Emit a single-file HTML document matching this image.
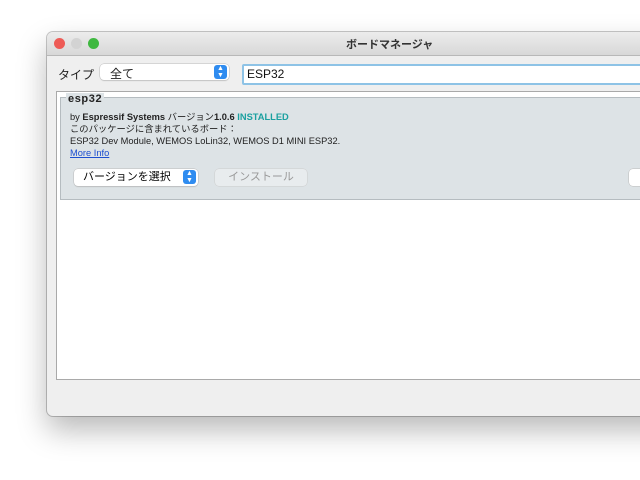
<!DOCTYPE html>
<html><head><meta charset="utf-8"><style>
body{margin:0;width:640px;height:480px;background:#fff;overflow:hidden;position:relative;font-family:"Liberation Sans","Noto Sans CJK JP",sans-serif;}
.win{position:absolute;left:47px;top:32px;width:640px;height:384px;background:#efefef;border-radius:6px;box-shadow:0 14px 30px rgba(0,0,0,0.28),0 0 0 1px #c8c8c8;overflow:hidden}
.title{position:absolute;left:0;top:0;right:0;height:23px;background:linear-gradient(#ececec,#d8d8d8);border-bottom:1px solid #b8b8b8;}
.title span{position:absolute;left:299px;top:4px;font-size:11px;color:#333;font-weight:bold}
.dot{position:absolute;top:6px;width:11px;height:11px;border-radius:50%}
.lab{position:absolute;left:11px;top:34px;font-size:12px;color:#222}
.sel{position:absolute;top:32px;height:16px;background:#fff;border-radius:4px;box-shadow:0 0 0 .5px #bbb,0 1px 1px rgba(0,0,0,.15);font-size:12px;color:#222}
.arr{position:absolute;right:2px;top:1px;width:13px;height:14px;background:#2f8cf0;border-radius:3px;color:#fff;font-size:7px;line-height:7px;text-align:center}
.search{position:absolute;left:195px;top:32px;width:460px;height:17px;background:#fff;border:2px solid #8ec3e6;border-radius:2px;font-size:12px;line-height:17px;padding-left:3px;color:#111}
.box{position:absolute;left:9px;top:59px;width:640px;height:287px;background:#fff;border:1px solid #a9a9a9}
.entry{position:absolute;left:3px;top:5px;width:640px;height:101px;background:#dde3e6;border:1px solid #b5bcc0}
.ttl{position:absolute;left:5px;top:-5px;line-height:12px;background:#dde3e6;font-size:11px;font-weight:bold;color:#222;padding:0 2px;letter-spacing:.6px}
.t{position:absolute;left:9px;font-size:9.3px;line-height:12px;height:12px;color:#222;white-space:nowrap}
.btn{position:absolute;top:71px;height:17px;border-radius:4px;font-size:11px;line-height:17px}
</style></head><body>
<div class="win">
<div class="title"><div class="dot" style="left:7px;background:#ee5b56"></div><div class="dot" style="left:24px;background:#d3d3d3"></div><div class="dot" style="left:41px;background:#3fb840"></div><span>ボードマネージャ</span></div>
<div class="lab">タイプ</div>
<div class="sel" style="left:53px;width:129px"><span style="position:absolute;left:10px;top:1px">全て</span><div class="arr">▲<br>▼</div></div>
<div class="search">ESP32</div>
<div class="box"><div class="entry">
<div class="ttl">esp32</div>
<div class="t" style="top:13px">by <b>Espressif Systems</b> バージョン<b>1.0.6</b> <b style="color:#1aa0a0">INSTALLED</b></div>
<div class="t" style="top:25px">このパッケージに含まれているボード：</div>
<div class="t" style="top:37px">ESP32 Dev Module, WEMOS LoLin32, WEMOS D1 MINI ESP32.</div>
<div class="t" style="top:49px;color:#1c4fd0;text-decoration:underline">More Info</div>
<div class="btn" style="left:13px;width:124px;background:#fff;box-shadow:0 0 0 .5px #bbb,0 1px 1px rgba(0,0,0,.15)"><span style="position:absolute;left:9px">バージョンを選択</span><div class="arr">▲<br>▼</div></div>
<div class="btn" style="left:154px;width:92px;background:#e8ecee;color:#999;box-shadow:0 0 0 .5px #ccc;text-align:center">インストール</div>
<div class="btn" style="left:568px;width:60px;background:#fff;box-shadow:0 0 0 .5px #bbb"></div>
</div></div>
</div>
</body></html>
